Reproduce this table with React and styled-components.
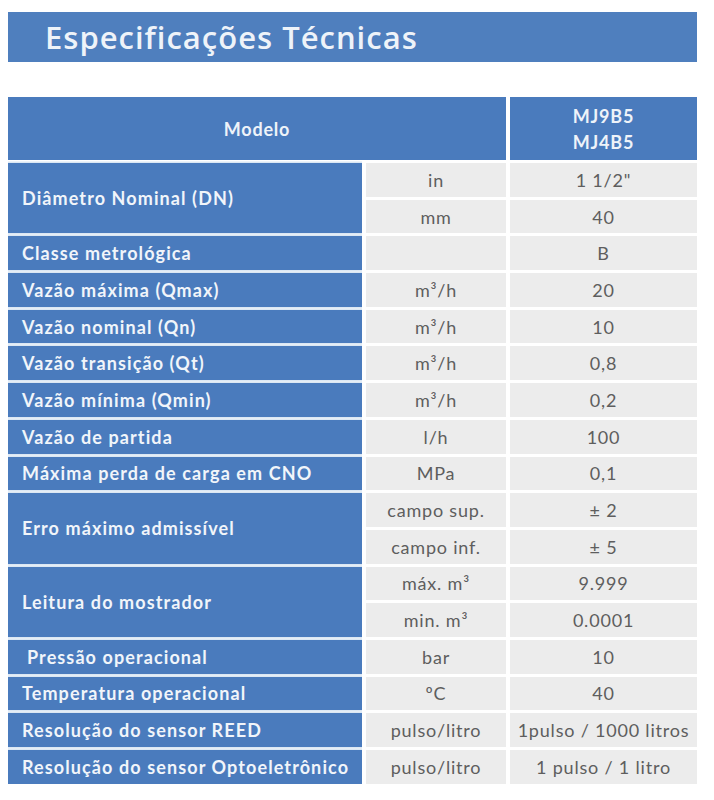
import React from 'react';
import styled, { createGlobalStyle } from 'styled-components';

const GlobalStyle = createGlobalStyle`
  body {
    margin: 0;
    background: #ffffff;
    font-family: Lato, "Liberation Sans", sans-serif;
  }
`;

const Page = styled.div`
  width: 689px;
  padding: 12px 0 0 8px;
`;

const TitleBar = styled.div`
  height: 50px;
  background-color: #4f7fbe;
  display: flex;
  align-items: center;
  padding-left: 37px;
  margin-bottom: 35px;
`;

const Title = styled.h1`
  margin: 0;
  font-family: "Open Sans", "DejaVu Sans", sans-serif;
  font-weight: 600;
  font-size: 31px;
  letter-spacing: 1px;
  color: #eef3f9;
`;

const Table = styled.div`
  display: grid;
  grid-template-columns: 354px 140px 187px;
  column-gap: 4px;
  row-gap: 3px;
`;

const HeaderCell = styled.div`
  grid-column: ${(p) => p.$col};
  height: 63px;
  background-color: #4a7bbd;
  color: #eef3f9;
  font-weight: 700;
  font-size: 18px;
  letter-spacing: 0.8px;
  line-height: 26px;
  display: flex;
  align-items: center;
  justify-content: center;
  text-align: center;
`;

const Label = styled.div`
  grid-row: span ${(p) => p.$span || 1};
  background-color: #4a7bbd;
  color: #f1f5fa;
  font-weight: 700;
  font-size: 18px;
  letter-spacing: 1.1px;
  display: flex;
  align-items: center;
  padding-left: ${(p) => (p.$indent ? 19 : 14)}px;
  box-shadow: 0 1.5px 0 #dbe7f4, 0 -1.5px 0 #dbe7f4;
  white-space: nowrap;
`;

const Cell = styled.div`
  grid-column: ${(p) => p.$col || 'auto'};
  height: 33.7px;
  background-color: #ececec;
  color: #5e5e5e;
  font-size: 18px;
  letter-spacing: 0.8px;
  display: flex;
  align-items: center;
  justify-content: center;
  white-space: nowrap;
`;

const specs = [
  { label: 'Diâmetro Nominal (DN)', rows: [['in', '1 1/2"'], ['mm', '40']] },
  { label: 'Classe metrológica', rows: [['', 'B']] },
  { label: 'Vazão máxima (Qmax)', rows: [['m³/h', '20']] },
  { label: 'Vazão nominal (Qn)', rows: [['m³/h', '10']] },
  { label: 'Vazão transição (Qt)', rows: [['m³/h', '0,8']] },
  { label: 'Vazão mínima (Qmin)', rows: [['m³/h', '0,2']] },
  { label: 'Vazão de partida', rows: [['l/h', '100']] },
  { label: 'Máxima perda de carga em CNO', rows: [['MPa', '0,1']] },
  { label: 'Erro máximo admissível', rows: [['campo sup.', '± 2'], ['campo inf.', '± 5']] },
  { label: 'Leitura do mostrador', rows: [['máx. m³', '9.999'], ['min. m³', '0.0001']] },
  { label: 'Pressão operacional', indent: true, rows: [['bar', '10']] },
  { label: 'Temperatura operacional', rows: [['ºC', '40']] },
  { label: 'Resolução do sensor REED', rows: [['pulso/litro', '1pulso / 1000 litros']] },
  { label: 'Resolução do sensor Optoeletrônico', rows: [['pulso/litro', '1 pulso / 1 litro']] },
];

const App = () => (
  <>
    <GlobalStyle />
    <Page>
      <TitleBar>
        <Title>Especificações Técnicas</Title>
      </TitleBar>
      <Table>
        <HeaderCell $col="1 / 3">Modelo</HeaderCell>
        <HeaderCell $col="3">
          MJ9B5
          <br />
          MJ4B5
        </HeaderCell>
        {specs.map((spec) => (
          <React.Fragment key={spec.label}>
            <Label $span={spec.rows.length} $indent={spec.indent}>
              {spec.label}
            </Label>
            {spec.rows.map(([unit, value], i) => (
              <React.Fragment key={i}>
                <Cell $col="2">{unit}</Cell>
                <Cell $col="3">{value}</Cell>
              </React.Fragment>
            ))}
          </React.Fragment>
        ))}
      </Table>
    </Page>
  </>
);

export default App;
